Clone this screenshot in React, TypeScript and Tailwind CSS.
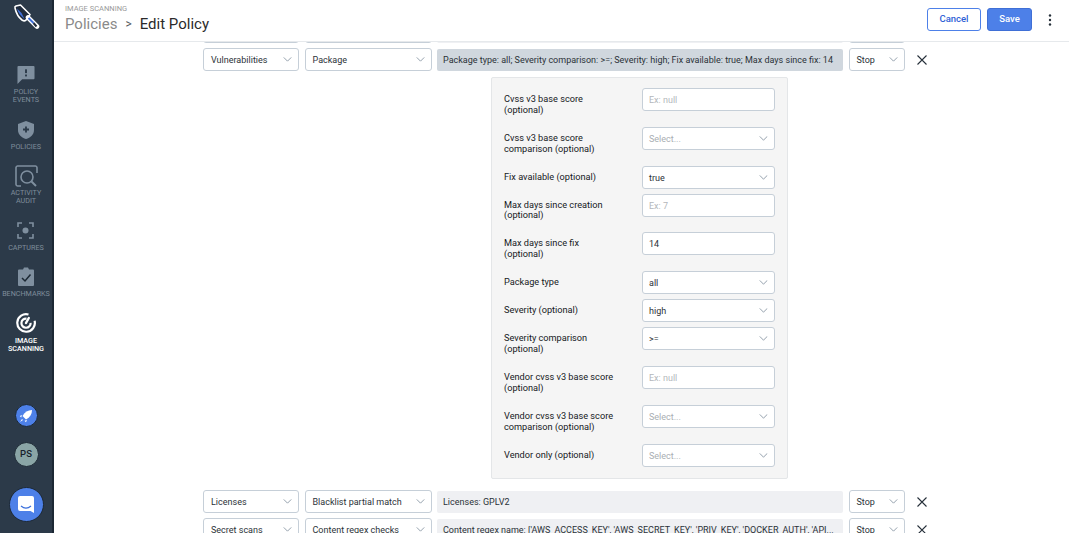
import React from "react";

function Chevron({ className = "" }: { className?: string }) {
  return (
    <svg viewBox="0 0 10 6" className={"w-[9px] h-[5px] shrink-0 " + className} fill="none" stroke="#7f8e9c" strokeWidth="1">
      <path d="M0.5 0.5 L5 5 L9.5 0.5" />
    </svg>
  );
}

function Select({ value, width, placeholder, pad = "pl-[7px]" }: { value: string; width: string; placeholder?: boolean; pad?: string }) {
  return (
    <div className={`${width} ${pad} h-[23px] shrink-0 bg-white border border-[#c6cfd8] rounded-[3px] flex items-center justify-between pr-[6px]`}>
      <span className={`text-[9px] leading-[13px] pt-[2px] whitespace-nowrap ${placeholder ? "text-[#a9aeb3]" : "text-[#2b3238]"}`}>{value}</span>
      <Chevron />
    </div>
  );
}

function X() {
  return (
    <svg viewBox="0 0 10 10" className="w-[10px] h-[10px] ml-[7px] shrink-0" fill="none" stroke="#26303a" strokeWidth="1.1">
      <path d="M0.5 0.5 L9.5 9.5 M9.5 0.5 L0.5 9.5" />
    </svg>
  );
}

function Row({ a, b, c, active }: { a: string; b: string; c: string; active?: boolean }) {
  return (
    <div className="flex items-center ml-[149px] gap-[5.5px]">
      <Select value={a} width="w-[96px]" />
      <Select value={b} width="w-[127px]" />
      <div className={`w-[406px] h-[22px] shrink-0 rounded-[2px] flex items-center pl-[6px] overflow-hidden ${active ? "bg-[#d0d7de]" : "bg-[#eff0f3]"}`}>
        <span className="text-[9px] leading-[13px] pt-[2px] text-[#2b3238] whitespace-nowrap">{c}</span>
      </div>
      <Select value="Stop" width="w-[56px]" />
      <X />
    </div>
  );
}

type Field = { label: string; kind: "input" | "select"; value?: string; ph?: string };

const fields: Field[] = [
  { label: "Cvss v3 base score (optional)", kind: "input", ph: "Ex: null" },
  { label: "Cvss v3 base score comparison (optional)", kind: "select", ph: "Select..." },
  { label: "Fix available (optional)", kind: "select", value: "true" },
  { label: "Max days since creation (optional)", kind: "input", ph: "Ex: 7" },
  { label: "Max days since fix (optional)", kind: "input", value: "14" },
  { label: "Package type", kind: "select", value: "all" },
  { label: "Severity (optional)", kind: "select", value: "high" },
  { label: "Severity comparison (optional)", kind: "select", value: ">=" },
  { label: "Vendor cvss v3 base score (optional)", kind: "input", ph: "Ex: null" },
  { label: "Vendor cvss v3 base score comparison (optional)", kind: "select", ph: "Select..." },
  { label: "Vendor only (optional)", kind: "select", ph: "Select..." },
];

function FormRow({ f }: { f: Field }) {
  return (
    <div className="flex items-start">
      <div className="w-[138px] pr-[26px] pt-[6px] pb-[11.4px] text-[9.2px] leading-[10.7px] text-[#15191d]">{f.label}</div>
      {f.kind === "select" ? (
        <Select value={f.value ?? f.ph ?? ""} placeholder={!f.value} width="w-[133px]" pad="pl-[6px]" />
      ) : (
        <div className="w-[133px] h-[23px] bg-white border border-[#c6cfd8] rounded-[3px] flex items-center pl-[6px]">
          <span className={`text-[9px] leading-[13px] pt-[2px] ${f.value ? "text-[#2b3238]" : "text-[#b3b7bb]"}`}>{f.value ?? f.ph}</span>
        </div>
      )}
    </div>
  );
}

function NavItem({ icon, label, active, mt, gap = "mt-[4px]" }: { icon: React.ReactNode; label: string[]; active?: boolean; mt: string; gap?: string }) {
  return (
    <div className={`flex flex-col items-center ${mt}`}>
      {icon}
      <div className={`${gap} text-[7.2px] leading-[8px] text-center whitespace-nowrap ${active ? "text-white font-medium" : "text-[#7f8d9b]"}`}>
        {label.map((l) => (
          <div key={l}>{l}</div>
        ))}
      </div>
    </div>
  );
}

const G = "#7f8f9f";

export default function App() {
  return (
    <div className="h-screen w-full flex overflow-hidden bg-white" style={{ fontFamily: "Roboto, 'Liberation Sans', sans-serif" }}>
      <aside className="w-[54px] shrink-0 h-full bg-[#2c3a49] border-r-2 border-[#1c2834] flex flex-col items-center">
        <svg viewBox="0 0 27 27" className="w-[27px] h-[27px] mt-[4px]">
          <path d="M2 4 C1.5 3 2 2.5 3 2 L7.5 1 L17 10.5 L13.5 15.5 C12.5 17 10.5 17 9 16 C5 13 3 8.5 2 4 Z" fill="#1f2b3c" stroke="#fff" strokeWidth="1.6" strokeLinejoin="round" />
          <path d="M4 4.5 L8.5 9 L11.5 15 C8 12.5 5 8.5 4 4.5 Z" fill="#3f6fd8" />
          <path d="M15 13.5 L24 22.5" stroke="#fff" strokeWidth="4.6" strokeLinecap="round" />
          <path d="M15.5 14 L20.5 19" stroke="#3f6fd8" strokeWidth="2" />
          <path d="M20.5 19 L23.5 22.5" stroke="#1f2b3c" strokeWidth="2" />
        </svg>
        <NavItem
          mt="mt-[35px]"
          label={["POLICY", "EVENTS"]}
          icon={
            <svg viewBox="0 0 18 19" className="w-[18px] h-[18px]">
              <path d="M1 0 H17 A1 1 0 0 1 18 1 V13 A1 1 0 0 1 17 14 H5 L0 19 V1 A1 1 0 0 1 1 0 Z" fill={G} />
              <rect x="8" y="3.5" width="2" height="4" fill="#2c3a49" />
              <rect x="8" y="9" width="2" height="2" fill="#2c3a49" />
            </svg>
          }
        />
        <NavItem
          mt="mt-[17px]"
          label={["POLICIES"]}
          icon={
            <svg viewBox="0 0 16 18" className="w-[16px] h-[18px]">
              <path d="M8 0 L16 3 V9 C16 13.5 12.5 16.8 8 18 C3.5 16.8 0 13.5 0 9 V3 Z" fill={G} />
              <path d="M8 5.5 V11.5 M5 8.5 H11" stroke="#2c3a49" strokeWidth="1.8" />
            </svg>
          }
        />
        <NavItem
          mt="mt-[14px]"
          gap="mt-[2px]"
          label={["ACTIVITY", "AUDIT"]}
          icon={
            <svg viewBox="0 0 23 22" className="w-[23px] h-[22px]" fill="none" stroke={G} strokeWidth="1.6">
              <path d="M6 21 H2.5 A1.7 1.7 0 0 1 1 19.5 V2.5 A1.7 1.7 0 0 1 2.5 1 H20.5 A1.7 1.7 0 0 1 22 2.5 V8" />
              <circle cx="12" cy="12" r="6" />
              <path d="M16.5 16.5 L21 21" strokeWidth="2" />
            </svg>
          }
        />
        <NavItem
          mt="mt-[17px]"
          gap="mt-[5px]"
          label={["CAPTURES"]}
          icon={
            <svg viewBox="0 0 17 17" className="w-[17px] h-[17px]" fill="none" stroke={G} strokeWidth="1.6">
              <path d="M1 5 V1 H5 M12 1 H16 V5 M16 12 V16 H12 M5 16 H1 V12" />
              <circle cx="8.5" cy="8.5" r="3" fill={G} stroke="none" />
            </svg>
          }
        />
        <NavItem
          mt="mt-[15px]"
          label={["BENCHMARKS"]}
          icon={
            <svg viewBox="0 0 16 19" className="w-[16px] h-[19px]">
              <path d="M1 2.5 H5 L6 0.5 H10 L11 2.5 H15 A1 1 0 0 1 16 3.5 V18 A1 1 0 0 1 15 19 H1 A1 1 0 0 1 0 18 V3.5 A1 1 0 0 1 1 2.5 Z" fill={G} />
              <path d="M4 11 L7 14 L12.5 7.5" stroke="#1c2834" strokeWidth="1.5" fill="none" />
            </svg>
          }
        />
        <NavItem
          mt="mt-[15px]"
          active
          label={["IMAGE", "SCANNING"]}
          icon={
            <svg viewBox="0 0 20 20" className="w-[20px] h-[20px]" fill="none" stroke="#fff" strokeWidth="2.2">
              <path d="M12.5 1.5 A8.8 8.8 0 1 0 18.6 7.8" />
              <path d="M10.5 5.6 A4.6 4.6 0 1 0 14.6 9.8" />
              <path d="M10 10 L12.8 5" strokeWidth="2.4" strokeLinecap="round" />
            </svg>
          }
        />
        <div className="mt-[51px] w-[23px] h-[23px] rounded-full bg-[#4d80e8] border border-[#1c2834] flex items-center justify-center">
          <svg viewBox="0 0 14 14" className="w-[14px] h-[14px]">
            <path d="M13 1 C9 1 5.5 3 3.5 7 L7 10.5 C11 8.5 13 5 13 1 Z" fill="#fff" />
            <path d="M3 6 L0.8 7 L2.2 8.5 Z M8 11 L7 13.2 L5.5 11.8 Z M3 10 L1 13 L4 11 Z" fill="#fff" />
          </svg>
        </div>
        <div className="mt-[15px] w-[25px] h-[25px] rounded-full bg-[#8aa5a6] border border-[#1c2834] flex items-center justify-center text-[9.5px] text-[#17222c] font-medium">PS</div>
        <div className="mt-[20px] w-[35px] h-[35px] rounded-full bg-[#4d80e8] border border-[#1c2834] flex items-center justify-center">
          <svg viewBox="0 0 16 17" className="w-[16px] h-[17px]">
            <path d="M2 0 H14 A2 2 0 0 1 16 2 V17 L12.5 15 H2 A2 2 0 0 1 0 13 V2 A2 2 0 0 1 2 0 Z" fill="#fff" />
            <path d="M3 10 C6 12.5 10 12.5 13 10" stroke="#3a6fdc" strokeWidth="1.2" fill="none" />
          </svg>
        </div>
      </aside>

      <main className="flex-1 min-w-0 flex flex-col h-full">
        <header className="relative z-10 h-[42px] shrink-0 bg-white border-b border-[#e6e9ec] flex items-center pl-[11px] pr-[17px]">
          <div className="flex flex-col -mt-[2px]">
            <div className="text-[7.5px] leading-[9px] text-[#9a9a9a] mt-[-2px]">IMAGE SCANNING</div>
            <div className="flex items-center text-[15px] leading-[20px] mt-[1px]">
              <span className="text-[#8a8a8a]">Policies</span>
              <span className="text-[#55595d] mx-[8px] text-[12px]">&gt;</span>
              <span className="text-[#2b2b2b]">Edit Policy</span>
            </div>
          </div>
          <div className="ml-auto flex items-center -mt-[2px]">
            <button className="w-[54px] h-[23px] rounded-[3px] border border-[#4d80e8] bg-white text-[9.5px] font-medium text-[#2f62d6]">Cancel</button>
            <button className="ml-[6px] w-[45px] h-[23px] rounded-[3px] bg-[#4d80e8] border border-[#3f6fd6] text-[9.5px] font-medium text-white">Save</button>
            <svg viewBox="0 0 4 12" className="w-[4px] h-[12px] ml-[16px]" fill="#26303a">
              <circle cx="2" cy="1.5" r="1.2" />
              <circle cx="2" cy="6" r="1.2" />
              <circle cx="2" cy="10.5" r="1.2" />
            </svg>
          </div>
        </header>
        <div className="flex-1 min-h-0 overflow-hidden">
          <div className="-mt-[22px]">
            <Row a="Vulnerabilities" b="Package" c="Package type: all" />
          </div>
          <div className="mt-[5px]">
            <Row active a="Vulnerabilities" b="Package" c="Package type: all; Severity comparison: >=; Severity: high; Fix available: true; Max days since fix: 14" />
          </div>
          <div className="ml-[437px] mt-[6px] w-[296.5px] h-[402px] bg-[#f5f5f5] border border-[#e4e6e8] rounded-[2px] pt-[10px] pl-[12px]">
            {fields.map((f) => (
              <FormRow key={f.label} f={f} />
            ))}
          </div>
          <div className="mt-[11px]">
            <Row a="Licenses" b="Blacklist partial match" c="Licenses: GPLV2" />
          </div>
          <div className="mt-[5px]">
            <Row a="Secret scans" b="Content regex checks" c="Content regex name: ['AWS_ACCESS_KEY', 'AWS_SECRET_KEY', 'PRIV_KEY', 'DOCKER_AUTH', 'API..." />
          </div>
        </div>
      </main>
    </div>
  );
}
